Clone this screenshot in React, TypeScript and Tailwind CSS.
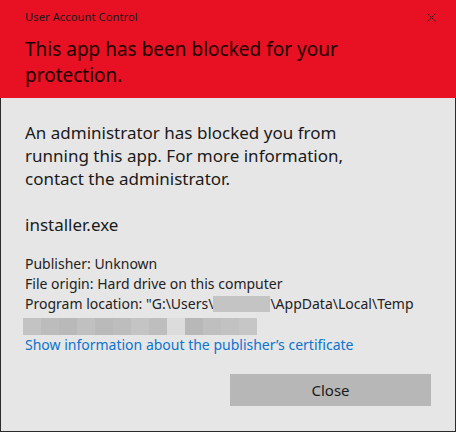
import { X } from "lucide-react"

const blurTiles = ["#c3c3c3", "#bcbcbc", "#b9b9b9", "#c0c0c0", "#bababa", "#bdbdbd", "#c4c4c4", "#bebebe", "#dcdcdc", "#b8b8b8", "#bfbfbf", "#c2c2c2", "#c6c6c6"]
const blurWidths = [18, 18, 18, 18, 18, 18, 18, 18, 18, 18, 18, 18, 18]

export default function App() {
    return (
        <div className="w-[456px] h-[432px] flex flex-col bg-[#e6e6e6] font-['Noto_Sans',sans-serif]">
            <div className="h-[98px] bg-[#e81123] flex flex-col px-[25px] relative">
                <div className="text-[11.3px] text-[#1a1a1a] pt-[7px] leading-[20px]">User Account Control</div>
                <X className="absolute right-[17px] top-[10px] text-[#1a1a1a]" size={15} strokeWidth={1.4} />
                <h1 className="text-[19px] leading-[26px] text-[#1a0000] mt-[9px] w-[330px]">
                    This app has been blocked for your protection.
                </h1>
            </div>
            <div className="flex-1 flex flex-col border-x border-b border-[#2b2b2b] px-[24px] text-[#1a1a1a]">
                <p className="text-[17px] leading-[23px] mt-[23px] w-[330px]">
                    An administrator has blocked you from running this app. For more information, contact the administrator.
                </p>
                <p className="text-[17px] leading-[23px] mt-[23px]">installer.exe</p>
                <div className="text-[14px] leading-[20px] mt-[18px] text-[#222]">
                    <div>Publisher: Unknown</div>
                    <div>File origin: Hard drive on this computer</div>
                    <div className="flex items-center">
                        <span>Program location: "G:\Users\</span>
                        <span className="inline-block w-[57px] h-[16px] bg-[#c4c4c4]" />
                        <span>\AppData\Local\Temp</span>
                    </div>
                    <div className="flex h-[17px] mt-[4px] -ml-[2px]">
                        {blurTiles.map((c, i) => (
                            <div key={i} style={{ backgroundColor: c, width: blurWidths[i] }} />
                        ))}
                    </div>
                </div>
                <a className="text-[14px] leading-[20px] text-[#0a74d0]">Show information about the publisher’s certificate</a>
                <div className="flex justify-end mt-[19px]">
                    <button className="w-[201px] h-[32px] bg-[#b7b7b7] text-[15px] text-[#1a1a1a]">Close</button>
                </div>
            </div>
        </div>
    )
}
